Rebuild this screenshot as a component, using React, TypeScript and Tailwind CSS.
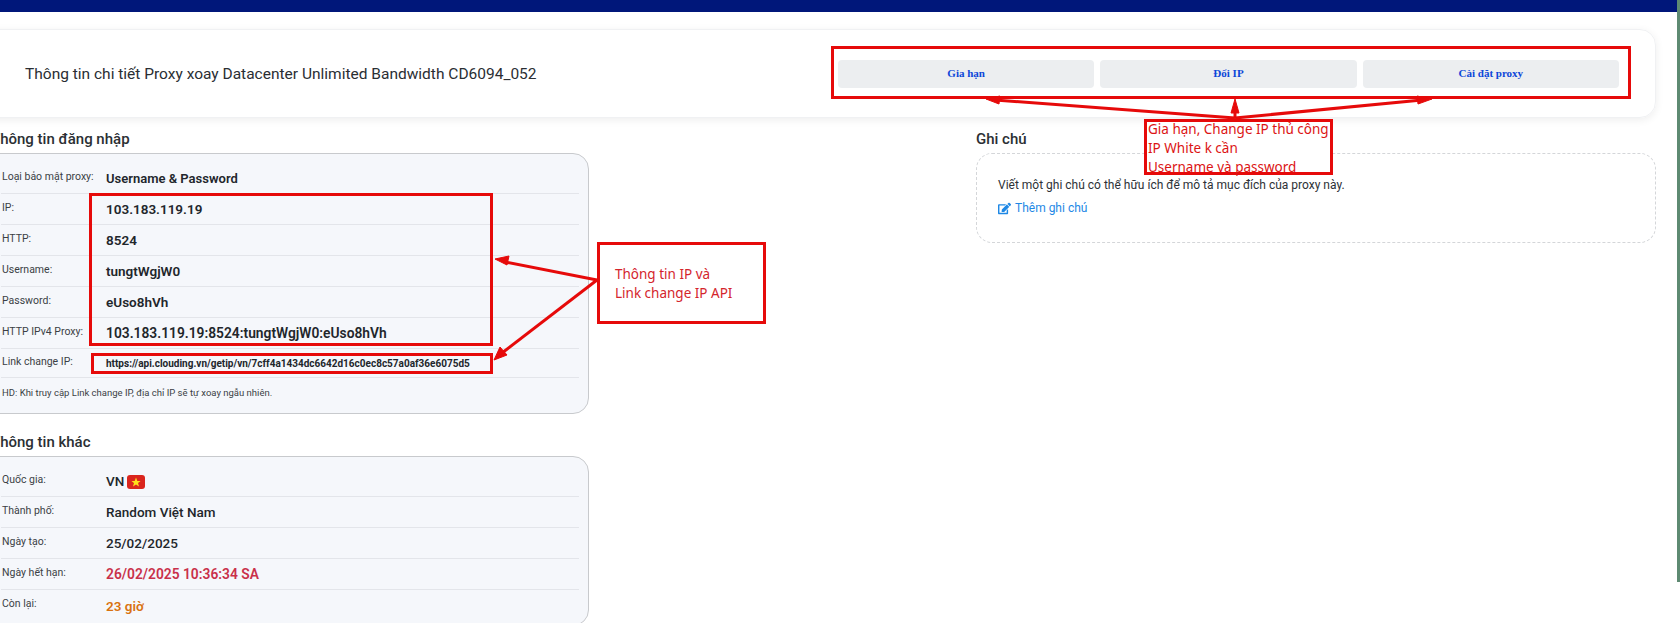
import React from "react";
import { FaEdit } from "react-icons/fa";

type Row = { label: string; value: React.ReactNode; cls?: string; h?: string };

const login: Row[] = [
  { label: "Loại bảo mật proxy:", value: "Username & Password", cls: "text-[13px] font-semibold" },
  { label: "IP:", value: "103.183.119.19", cls: "text-[13.5px] font-semibold" },
  { label: "HTTP:", value: "8524", cls: "text-[13.5px] font-semibold" },
  { label: "Username:", value: "tungtWgjW0", cls: "text-[13.5px] font-semibold" },
  { label: "Password:", value: "eUso8hVh", cls: "text-[13.5px] font-semibold" },
  { label: "HTTP IPv4 Proxy:", value: "103.183.119.19:8524:tungtWgjW0:eUso8hVh", cls: "text-[13.8px] font-semibold" },
  {
    label: "Link change IP:",
    value: "https://api.clouding.vn/getip/vn/7cff4a1434dc6642d16c0ec8c57a0af36e6075d5",
    cls: "text-[10px] font-bold",
    h: "h-[29px]",
  },
];

const other: Row[] = [
  {
    label: "Quốc gia:",
    value: (
      <span className="flex items-center gap-[3px]">
        VN
        <svg width="18" height="14" viewBox="0 0 18 14">
          <rect width="18" height="14" rx="3" fill="#da251d" />
          <polygon points="9,2.6 10.3,6 13.6,6 11,8.1 12,11.4 9,9.4 6,11.4 7,8.1 4.4,6 7.7,6" fill="#ffe01a" />
        </svg>
      </span>
    ),
    cls: "text-[13.5px] font-medium",
  },
  { label: "Thành phố:", value: "Random Việt Nam", cls: "text-[13.5px] font-medium" },
  { label: "Ngày tạo:", value: "25/02/2025", cls: "text-[13.5px] font-medium" },
  { label: "Ngày hết hạn:", value: "26/02/2025 10:36:34 SA", cls: "text-[13.8px] font-semibold text-[#c9304a]" },
  { label: "Còn lại:", value: "23 giờ", cls: "text-[13.5px] font-semibold text-[#d9720f]" },
];

function InfoRow({ row, last }: { row: Row; last?: boolean }) {
  return (
    <div className={`flex items-center ${row.h ?? "h-[31px]"} ${last ? "" : "border-b border-[#e3e5ea]"}`}>
      <div className="w-[105px] shrink-0 pb-[3px] pl-px text-[10.5px] text-[#3b3f45]">{row.label}</div>
      <div className={`pt-[1px] text-[#22262b] ${row.cls ?? ""}`}>{row.value}</div>
    </div>
  );
}

function Heading({ children }: { children: React.ReactNode }) {
  return <h2 className="h-[24px] text-[15px] leading-[20px] font-medium text-[#2b2f33]">{children}</h2>;
}

function ActionButton({ children }: { children: React.ReactNode }) {
  return (
    <div className="flex h-[28px] flex-1 items-center justify-center rounded-[4px] bg-[#eceef0] font-['Liberation_Serif',serif] text-[11px] font-bold text-[#0d47d9]">
      {children}
    </div>
  );
}

export default function App() {
  return (
    <div className="relative flex h-[623px] w-[1680px] overflow-hidden bg-white font-['Roboto',sans-serif]">
      <div className="w-[1677px] shrink-0">
        <div className="h-[12px] bg-[#00177a]" />
        <div className="-ml-[24px] w-[1680px] pt-[17px]">
          <div className="flex h-[89px] items-center justify-between rounded-[16px] border border-[#f0f1f3] pl-[48px] pr-[36px] shadow-[0_2px_8px_rgba(0,0,0,0.07)]">
            <div className="pt-[2px] text-[15.5px] text-[#2a2e33]">
              Thông tin chi tiết Proxy xoay Datacenter Unlimited Bandwidth CD6094_052
            </div>
            <div className="flex w-[781px] gap-[6px]">
              <ActionButton>Gia hạn</ActionButton>
              <ActionButton>Đổi IP</ActionButton>
              <ActionButton>Cài đặt proxy</ActionButton>
            </div>
          </div>
          <div className="flex justify-between pt-[11px]">
            <div className="w-[613px]">
              <div className="pl-[15px]">
                <Heading>Thông tin đăng nhập</Heading>
              </div>
              <div className="h-[261px] rounded-[16px] border border-[#c8cacd] bg-[#f5f7fb] pl-[24px] pr-[9px] pt-[9px]">
                {login.map((r) => (
                  <InfoRow key={r.label} row={r} />
                ))}
                <div className="flex h-[30px] items-center pl-px text-[9.5px] text-[#3b3f45]">
                  HD: Khi truy cập Link change IP, địa chỉ IP sẽ tự xoay ngẫu nhiên.
                </div>
              </div>
              <div className="pl-[15px] pt-[18px]">
                <Heading>Thông tin khác</Heading>
              </div>
              <div className="h-[170px] rounded-[16px] border border-[#c8cacd] bg-[#f5f7fb] pl-[24px] pr-[9px] pt-[9px]">
                {other.map((r, i) => (
                  <InfoRow key={r.label} row={r} last={i === other.length - 1} />
                ))}
              </div>
            </div>
            <div className="w-[680px]">
              <Heading>Ghi chú</Heading>
              <div className="h-[90px] rounded-[16px] border border-dashed border-[#d4d6d9] px-[21px] pt-[21px]">
                <div className="text-[12px] leading-[20px] text-[#2d3136]">
                  Viết một ghi chú có thể hữu ích để mô tả mục đích của proxy này.
                </div>
                <div className="mt-[3px] flex items-center gap-[4px] text-[12px] leading-[20px] text-[#1e88e5]">
                  <FaEdit className="h-[13px] w-[13px]" />
                  Thêm ghi chú
                </div>
              </div>
            </div>
          </div>
        </div>
      </div>
      <div className="h-[582px] w-[3px] bg-[#5e8a72]" />

      {/* red annotations drawn over the screenshot */}
      <div className="absolute left-[831px] top-[46px] h-[53px] w-[800px] border-[3px] border-[#e60a0a]" />
      <div className="absolute left-[1144px] top-[119px] h-[56px] w-[189px] border-[3px] border-[#e60a0a] bg-white pl-[1px] font-['Noto_Sans',sans-serif] text-[13.5px] leading-[19px] text-[#dc1414]">
        <div className="-mt-[2px] whitespace-nowrap">Gia hạn, Change IP thủ công</div>
        <div>IP White k cần</div>
        <div className="whitespace-nowrap">Username và password</div>
      </div>
      <div className="absolute left-[89px] top-[193px] h-[153px] w-[404px] border-[3px] border-[#e60a0a]" />
      <div className="absolute left-[91px] top-[353px] h-[21px] w-[402px] border-[3px] border-[#e60a0a]" />
      <div className="absolute left-[597px] top-[242px] h-[82px] w-[169px] border-[3px] border-[#e60a0a] pl-[15px] pt-[20px] font-['Noto_Sans',sans-serif] text-[13.5px] leading-[19px] text-[#d4242c]">
        <div>Thông tin IP và</div>
        <div>Link change IP API</div>
      </div>
      <svg className="pointer-events-none absolute left-0 top-0" width="1680" height="623" viewBox="0 0 1680 623" fill="#e60a0a" stroke="#e60a0a">
        <g strokeWidth="3" fill="none">
          <line x1="1235" y1="118" x2="995" y2="100" />
          <line x1="1235" y1="118" x2="1422" y2="100" />
          <line x1="1235" y1="118" x2="1235" y2="108" />
          <line x1="597" y1="280" x2="505" y2="262" />
          <line x1="597" y1="280" x2="502" y2="353" />
        </g>
        <g strokeWidth="1">
          <polygon points="986,99 1000,96 999,104" />
          <polygon points="1432,99 1417,96 1418,104" />
          <polygon points="1235,99 1231,113 1239,113" />
          <polygon points="495,259 509,256 507,265" />
          <polygon points="494,360 500,347 507,355" />
        </g>
      </svg>
    </div>
  );
}
